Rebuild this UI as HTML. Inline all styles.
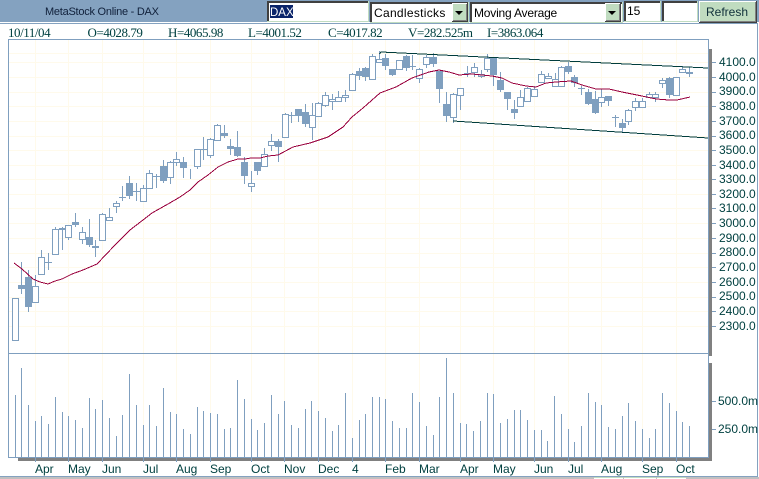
<!DOCTYPE html>
<html><head><meta charset="utf-8"><style>
html,body{margin:0;padding:0;background:#fff;width:759px;height:479px;overflow:hidden}
svg{display:block}
text{font-family:"Liberation Sans",sans-serif}
.s text{font-family:"Liberation Serif",serif;font-size:13px;letter-spacing:-.45px;fill:#004040}
.a text{font-size:12px;fill:#004040}
</style></head><body>
<svg width="759" height="479" viewBox="0 0 759 479" xmlns="http://www.w3.org/2000/svg">
<rect width="759" height="479" fill="#fff"/>
<!-- top bar -->
<rect width="759" height="22" fill="#84a2c0"/>
<rect x="0" y="23" width="758" height="1" fill="#84a2c0"/>
<rect x="757" y="23" width="1" height="454" fill="#84a2c0"/>
<text x="45" y="15" font-size="11" letter-spacing="-.25" fill="#10203a">MetaStock Online - DAX</text>
<!-- DAX input -->
<rect x="267" y="1" width="102" height="21" fill="#c0dcc0"/><rect x="267" y="1" width="101" height="20" fill="#404040"/><rect x="269" y="3" width="99" height="18" fill="#fff"/>
<rect x="270" y="5" width="23" height="13" fill="#0a246a"/>
<text x="270" y="16" font-size="11.5" fill="#fff">DAX</text>
<!-- Candlesticks -->
<rect x="370" y="2" width="99" height="21" fill="#c0dcc0"/><rect x="370" y="2" width="98" height="20" fill="#404040"/><rect x="372" y="4" width="96" height="18" fill="#fff"/>
<text x="374" y="17" font-size="12" letter-spacing=".3" fill="#000">Candlesticks</text>
<rect x="452" y="3" width="16" height="19" fill="#404040"/><rect x="452" y="3" width="15" height="18" fill="#fff"/><rect x="453" y="4" width="14" height="17" fill="#808080"/><rect x="453" y="4" width="13" height="16" fill="#c0dcc0"/>
<path d="M455 11h8l-4 4z" fill="#000"/>
<!-- Moving Average -->
<rect x="470" y="2" width="153" height="21" fill="#c0dcc0"/><rect x="470" y="2" width="152" height="20" fill="#404040"/><rect x="472" y="4" width="150" height="18" fill="#fff"/>
<text x="474" y="17" font-size="12" letter-spacing="-.2" fill="#000">Moving Average</text>
<rect x="605" y="3" width="16" height="19" fill="#404040"/><rect x="605" y="3" width="15" height="18" fill="#fff"/><rect x="606" y="4" width="14" height="17" fill="#808080"/><rect x="606" y="4" width="13" height="16" fill="#c0dcc0"/>
<path d="M608 11h8l-4 4z" fill="#000"/>
<!-- inputs -->
<rect x="624" y="1" width="37" height="21" fill="#c0dcc0"/><rect x="624" y="1" width="36" height="20" fill="#404040"/><rect x="626" y="3" width="34" height="18" fill="#fff"/>
<text x="627" y="15" font-size="12" fill="#000">15</text>
<rect x="662" y="1" width="36" height="21" fill="#c0dcc0"/><rect x="662" y="1" width="35" height="20" fill="#404040"/><rect x="664" y="3" width="33" height="18" fill="#fff"/>
<!-- Refresh -->
<rect x="699" y="1" width="58" height="22" fill="#404040"/><rect x="699" y="1" width="57" height="21" fill="#fff"/><rect x="700" y="2" width="56" height="20" fill="#808080"/><rect x="700" y="2" width="55" height="19" fill="#c0dcc0"/>
<text x="706" y="16" font-size="12" fill="#10303a">Refresh</text>
<!-- data line -->
<g class="s"><text x="8" y="37">10/11/04</text><text x="87.5" y="37">O=4028.79</text><text x="168" y="37">H=4065.98</text><text x="248" y="37">L=4001.52</text><text x="328" y="37">C=4017.82</text><text x="408" y="37">V=282.525m</text><text x="487" y="37">I=3863.064</text></g>
<!-- grid -->
<path shape-rendering="crispEdges" stroke="#fffaeb" fill="none" d="M9 62.5H708M9 77.5H708M9 92.5H708M9 106.5H708M9 121.5H708M9 136.5H708M9 150.5H708M9 165.5H708M9 179.5H708M9 194.5H708M9 208.5H708M9 223.5H708M9 238.5H708M9 253.5H708M9 267.5H708M9 282.5H708M9 297.5H708M9 311.5H708M9 326.5H708M9 53.5H708M35.5 40V457M68.5 40V457M102.5 40V457M143.5 40V457M176.5 40V457M210.5 40V457M251.5 40V457M284.5 40V457M318.5 40V457M352.5 40V457M385.5 40V457M419.5 40V457M460.5 40V457M493.5 40V457M534.5 40V457M568.5 40V457M601.5 40V457M642.5 40V457M676.5 40V457"/>
<!-- shadow -->
<rect x="18" y="458" width="694" height="3" fill="#808080"/>
<rect x="709" y="49" width="3" height="307" fill="#808080"/>
<rect x="709" y="363" width="3" height="98" fill="#808080"/>
<!-- frame -->
<path shape-rendering="crispEdges" fill="none" stroke="#7f9fbf" d="M8.5 39.5H708.5V457.5H8.5ZM8.5 353.5H708.5"/>
<!-- axis ticks -->
<path shape-rendering="crispEdges" stroke="#7f9fbf" d="M712 62.5h4M712 77.5h4M712 92.5h4M712 106.5h4M712 121.5h4M712 136.5h4M712 150.5h4M712 165.5h4M712 179.5h4M712 194.5h4M712 208.5h4M712 223.5h4M712 238.5h4M712 253.5h4M712 267.5h4M712 282.5h4M712 297.5h4M712 311.5h4M712 326.5h4M712 401.5h4M712 429.5h4M35.5 458v4M68.5 458v4M102.5 458v4M143.5 458v4M176.5 458v4M210.5 458v4M251.5 458v4M284.5 458v4M318.5 458v4M352.5 458v4M385.5 458v4M419.5 458v4M460.5 458v4M493.5 458v4M534.5 458v4M568.5 458v4M601.5 458v4M642.5 458v4M676.5 458v4"/>
<!-- axis labels -->
<g class="a">
<text x="719" y="66">4100.0</text><text x="719" y="81">4000.0</text><text x="719" y="95">3900.0</text><text x="719" y="110">3800.0</text><text x="719" y="125">3700.0</text><text x="719" y="139">3600.0</text><text x="719" y="154">3500.0</text><text x="719" y="169">3400.0</text><text x="719" y="183">3300.0</text><text x="719" y="198">3200.0</text><text x="719" y="212">3100.0</text><text x="719" y="227">3000.0</text><text x="719" y="242">2900.0</text><text x="719" y="256">2800.0</text><text x="719" y="271">2700.0</text><text x="719" y="286">2600.0</text><text x="719" y="300">2500.0</text><text x="719" y="315">2400.0</text><text x="719" y="330">2300.0</text>
<text x="718" y="405">500.0m</text><text x="718" y="433">250.0m</text>
<text x="35" y="473">Apr</text><text x="68" y="473">May</text><text x="102" y="473">Jun</text><text x="143" y="473">Jul</text><text x="176" y="473">Aug</text><text x="210" y="473">Sep</text><text x="251" y="473">Oct</text><text x="284" y="473">Nov</text><text x="318" y="473">Dec</text><text x="352" y="473">4</text><text x="385" y="473">Feb</text><text x="419" y="473">Mar</text><text x="460" y="473">Apr</text><text x="493" y="473">May</text><text x="534" y="473">Jun</text><text x="568" y="473">Jul</text><text x="601" y="473">Aug</text><text x="642" y="473">Sep</text><text x="676" y="473">Oct</text>
</g>
<!-- volume -->
<path shape-rendering="crispEdges" stroke="#7f9fbf" fill="none" d="M15.5 395V457M21.5 368V457M28.5 405V457M35.5 421V457M41.5 416V457M48.5 424V457M55.5 397V457M62.5 412V457M68.5 416V457M75.5 420V457M82.5 428V457M89.5 398V457M95.5 409V457M102.5 400V457M109.5 418V457M116.5 436V457M122.5 415V457M129.5 374V457M136.5 405V457M143.5 425V457M149.5 405V457M156.5 426V457M163.5 388V457M170.5 412V457M176.5 414V457M183.5 429V457M190.5 434V457M197.5 407V457M203.5 411V457M210.5 413V457M217.5 414V457M224.5 429V457M230.5 428V457M237.5 380V457M244.5 399V457M251.5 419V457M257.5 430V457M264.5 423V457M271.5 395V457M278.5 414V457M284.5 401V457M291.5 425V457M298.5 428V457M305.5 409V457M311.5 401V457M318.5 411V457M325.5 418V457M332.5 431V457M338.5 425V457M345.5 393V457M352.5 438V457M359.5 420V457M365.5 414V457M372.5 397V457M379.5 397V457M385.5 399V457M392.5 421V457M399.5 428V457M406.5 428V457M412.5 393V457M419.5 402V457M426.5 426V457M433.5 435V457M439.5 397V457M446.5 358V457M453.5 393V457M460.5 423V457M466.5 424V457M473.5 431V457M480.5 421V457M487.5 393V457M493.5 394V457M500.5 423V457M507.5 419V457M514.5 410V457M520.5 410V457M527.5 420V457M534.5 430V457M541.5 430V457M547.5 441V457M554.5 396V457M561.5 414V457M568.5 429V457M574.5 442V457M581.5 426V457M588.5 393V457M595.5 402V457M601.5 405V457M608.5 427V457M615.5 429V457M622.5 416V457M628.5 403V457M635.5 421V457M642.5 429V457M649.5 438V457M655.5 429V457M662.5 393V457M669.5 403V457M676.5 411V457M682.5 422V457M689.5 426V457"/>
<!-- wicks and crosses -->
<path shape-rendering="crispEdges" stroke="#7f9fbf" fill="none" d="M21.5 262V294M28.5 270V312M35.5 275V286M41.5 250V257M48.5 253V270M45 262.5h7M55.5 227V254M62.5 227V250M68.5 225V240M75.5 213V227M82.5 227V244M89.5 219V247M95.5 240V257M102.5 213V240M109.5 208V221M116.5 201V213M122.5 186V201M119 197.5h7M129.5 176V199M136.5 183V201M133 191.5h7M143.5 185V201M149.5 170V188M156.5 174V188M153 176.5h7M163.5 160V183M170.5 161V184M176.5 152V166M183.5 157V178M190.5 169V179M197.5 149V169M203.5 137V160M200 149.5h7M210.5 138V158M217.5 124V140M224.5 125V138M230.5 139V155M237.5 131V157M244.5 157V184M251.5 171V192M257.5 162V175M264.5 148V166M271.5 134V151M278.5 139V162M285.5 113V138M291.5 112V123M288 115.5h7M298.5 109V122M305.5 104V127M312.5 103V140M318.5 102V116M325.5 92V107M332.5 94V110M338.5 91V102M345.5 90V102M352.5 73V90M359.5 68V80M365.5 67V81M372.5 54V80M379.5 51V63M385.5 54V70M392.5 69V76M399.5 60V69M406.5 55V71M412.5 55V70M409 66.5h7M419.5 68V83M426.5 55V68M433.5 53V67M439.5 71V103M446.5 92V122M453.5 93V123M460.5 88V110M467.5 66V77M464 73.5h7M474.5 63V77M481.5 70V78M487.5 54V72M493.5 58V86M500.5 72V92M507.5 92V110M514.5 100V119M520.5 90V106M527.5 87V101M534.5 86V96M541.5 71V82M548.5 73V79M555.5 73V86M561.5 66V86M568.5 62V74M574.5 75V87M581.5 86V95M578 88.5h7M588.5 89V105M595.5 91V114M601.5 89V107M608.5 96V106M615.5 115V127M612 117.5h7M622.5 119V133M628.5 109V125M635.5 98V111M642.5 98V107M649.5 92V97M655.5 92V102M662.5 78V88M669.5 77V98M676.5 77V95M682.5 66V72M689.5 67V77"/>
<!-- hollow bodies -->
<path shape-rendering="crispEdges" stroke="#7f9fbf" fill="#fff" d="M12.5 298.5h6v42h-6zM32.5 286.5h6v16h-6zM38.5 257.5h6v17h-6zM52.5 229.5h6v25h-6zM65.5 225.5h6v12h-6zM79.5 232.5h6v7h-6zM99.5 214.5h6v26h-6zM106.5 217.5h6v3h-6zM113.5 203.5h6v3h-6zM140.5 188.5h6v13h-6zM146.5 173.5h6v15h-6zM167.5 162.5h6v15h-6zM173.5 159.5h6v3h-6zM194.5 149.5h6v17h-6zM207.5 139.5h6v16h-6zM214.5 125.5h6v15h-6zM248.5 183.5h6v3h-6zM261.5 154.5h6v12h-6zM268.5 141.5h6v4h-6zM282.5 114.5h6v23h-6zM309.5 115.5h6v12h-6zM315.5 103.5h6v13h-6zM322.5 95.5h6v10h-6zM329.5 99.5h6v2h-6zM335.5 97.5h6v4h-6zM342.5 95.5h6v2h-6zM349.5 74.5h6v16h-6zM369.5 56.5h6v23h-6zM376.5 59.5h6v3h-6zM396.5 60.5h6v9h-6zM416.5 69.5h6v9h-6zM423.5 57.5h6v7h-6zM450.5 94.5h6v23h-6zM457.5 88.5h6v7h-6zM471.5 67.5h6v5h-6zM478.5 74.5h6v2h-6zM484.5 58.5h6v11h-6zM517.5 97.5h6v9h-6zM524.5 88.5h6v13h-6zM531.5 89.5h6v7h-6zM538.5 74.5h6v8h-6zM545.5 76.5h6v2h-6zM552.5 79.5h6v7h-6zM558.5 67.5h6v19h-6zM598.5 97.5h6v5h-6zM625.5 110.5h6v11h-6zM632.5 101.5h6v6h-6zM639.5 101.5h6v6h-6zM646.5 94.5h6v3h-6zM652.5 94.5h6v3h-6zM659.5 80.5h6v3h-6zM673.5 77.5h6v18h-6zM679.5 69.5h6v3h-6zM686.5 72.5h6v1h-6z"/>
<!-- filled bodies -->
<path shape-rendering="crispEdges" fill="#7f9fbf" d="M18 285h7v4h-7zM25 277h7v30h-7zM59 228h7v2h-7zM72 222h7v3h-7zM86 237h7v8h-7zM92 246h7v2h-7zM126 183h7v13h-7zM160 166h7v15h-7zM180 162h7v6h-7zM221 133h7v3h-7zM227 146h7v3h-7zM234 147h7v9h-7zM241 162h7v14h-7zM254 162h7v9h-7zM275 141h7v6h-7zM295 109h7v7h-7zM302 112h7v12h-7zM356 71h7v5h-7zM362 68h7v9h-7zM382 58h7v8h-7zM389 69h7v6h-7zM403 56h7v12h-7zM430 57h7v7h-7zM436 71h7v18h-7zM443 104h7v12h-7zM490 58h7v17h-7zM497 80h7v10h-7zM504 92h7v7h-7zM511 109h7v4h-7zM565 66h7v6h-7zM571 77h7v6h-7zM585 92h7v12h-7zM592 99h7v14h-7zM605 96h7v5h-7zM619 123h7v5h-7zM666 78h7v17h-7z"/>
<!-- moving average -->
<polyline fill="none" stroke="#99003d" stroke-width="1" shape-rendering="crispEdges" points="14,263 22,269 33,279 40,282 48,284 55,281 62,279 72,274 83,270 97,264 115,245 130,230 143,220 152,213 168,204 180,197 190,190 198,182 208,175 218,167 228,162 238,159 245,159 251,158 260,158 268,156 278,155 293,147 310,143 328,137 343,127 352,117 363,108 380,93 396,87 412,78 429,72 439,70 449,72 459,75 472,74 492,76 502,78 512,83 526,86 536,87 546,83 556,82 571,81 582,85 596,89 609,89 622,92 642,96 656,99 669,100 677,100 690,97"/>
<!-- channel lines -->
<polyline fill="none" stroke="#003c3c" stroke-width="1" shape-rendering="crispEdges" points="379.5,54 381,52 708,68"/>
<polyline fill="none" stroke="#003c3c" stroke-width="1" shape-rendering="crispEdges" points="453,121 708,138"/>
<!-- bottom strip -->
<rect x="0" y="476" width="758" height="1" fill="#84a2c0"/>
<rect x="0" y="477" width="759" height="2" fill="#c0c0c0"/>
<rect x="594" y="477" width="29" height="2" fill="#fff"/><rect x="594" y="477" width="29" height="1" fill="#c0dcc0"/>
<rect x="624" y="477" width="32" height="2" fill="#fff"/><rect x="624" y="477" width="32" height="1" fill="#c0dcc0"/>
<rect x="657" y="477" width="29" height="2" fill="#fff"/><rect x="657" y="477" width="29" height="1" fill="#c0dcc0"/>
</svg>
</body></html>
